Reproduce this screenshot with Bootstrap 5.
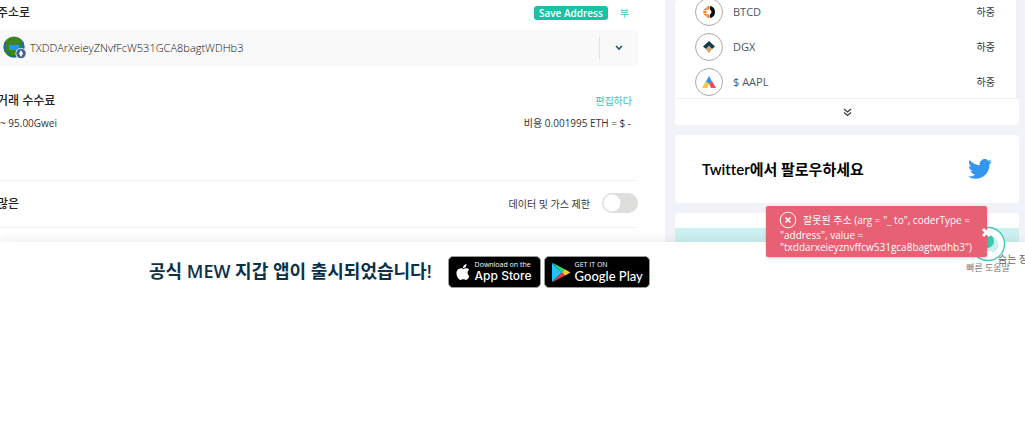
<!DOCTYPE html>
<html lang="ko">
<head>
<meta charset="utf-8">
<meta name="viewport" content="width=device-width, initial-scale=1">
<title>MEW</title>
<link href="https://cdn.jsdelivr.net/npm/bootstrap@5.3.0/dist/css/bootstrap.min.css" rel="stylesheet">
<style>
body{font-family:"Open Sans","Noto Sans CJK KR",sans-serif;font-size:10px;line-height:16px;color:#333;background:#fff;overflow-x:hidden}
.stage{overflow:hidden}
.send{padding-right:27px;min-width:0}
.label-line{height:30px;padding:0 9px 4px 0}
.ttl{font-size:12px;line-height:20px;font-weight:500;color:#222;margin:0 0 0 -3px}
.save{background:#1cc1a5;color:#fff;font-size:10px;line-height:14px;font-weight:600;border-radius:3px;padding:0 5px;border:0}
.teal{color:#3cc5b3;text-decoration:none;font-size:10px}
.addr{background:#f9f9f9;height:36px;border-radius:3px;padding-left:3px}
.addr input{border:0;background:none;outline:0;padding:0;font-size:11px;font-weight:300;color:#111;min-width:0}
.avatar{margin-right:2px}
.drop{width:39px;height:22px;border:0;border-left:1px solid #e2e2e2;background:none}
.fee{padding-top:25px;height:114px}
.fee .teal{margin-right:6px}
.fee .cost{margin-right:7px}
.more{height:48px;border-top:1px solid #f3f3f3;border-bottom:1px solid #f3f3f3}
.more .form-switch{min-height:0;padding:0}
.more .form-check-input{width:36px;height:20px;margin:0;border:0;background-color:#dededc;--bs-form-switch-bg:url("data:image/svg+xml,%3csvg xmlns='http://www.w3.org/2000/svg' viewBox='-4 -4 8 8'%3e%3ccircle r='3.4' fill='%23fff'/%3e%3c/svg%3e")}
.side{width:360px;background:#f2f3f9;padding:0 6px 0 10px;gap:10px}
.panel{background:#fff;border-radius:4px}
.tokens{height:98px;overflow:hidden;padding:0 21px 2px 20px;gap:7px;border-right:3px solid #f1f1f1}
.token{height:28px;flex:none;color:#4b5563}
.coin{width:28px;height:28px;border:1px solid #aaa;border-radius:50%;margin-right:10px}
.name{font-size:11px}
.bal{color:#333}
.expand{border:0;border-top:1px solid #f1f1f4;background:none;height:27px;width:100%}
.follow{height:68px;padding:0 27px;font-family:Lato,"Noto Sans CJK KR",sans-serif;font-size:15px;font-weight:600;font-variant-ligatures:none;color:#000}
.peek{height:29px;padding-top:15px}
.peek div{height:14px;background:#cdf0f2}
.promo{height:199px;box-shadow:0 -2px 10px rgba(0,0,0,.07);background:#fff;padding:14px 0 0 149px;position:relative}
.promo h1{font-size:18px;line-height:30px;font-weight:600;color:#0b3148;margin:0 16px 0 0}
.store{height:32px;background:#000;color:#fff;border:1px solid #999;border-radius:5px;text-decoration:none;padding-left:6px}
.apple{width:93px;margin-right:3px}.play{width:106px}
.store small{display:block;font-size:7px;line-height:8px}
.store b{display:block;font-size:12px;line-height:14px;font-weight:500;font-family:"Inter",sans-serif}
.play b{font-family:Lato,sans-serif;font-size:13px}
.help{right:15px;top:226px;width:44px;color:#777;font-size:9px;line-height:12px;text-align:center}
.help svg{display:block;margin:0 auto}
.hidden-info{left:calc(100% - 27px);top:251px;color:#666;font-size:10px}
.alertbox{right:38px;top:206px;width:221px;background:#e76073;color:#fff;border-radius:2px;padding:5px 14px 4px;line-height:12px;font-size:10px;box-shadow:0 1px 3px rgba(0,0,0,.2)}
.alertbox p{margin:0}
.mark-x{margin:0 6px 0 -1px;vertical-align:-5px}
.dismiss{right:-5px;top:21px;border:0;background:none;padding:0;line-height:0}
</style>
<script src="https://cdn.jsdelivr.net/npm/bootstrap@5.3.0/dist/js/bootstrap.bundle.min.js"></script>
</head>
<body>
<div class="position-relative stage">
<main class="d-flex">
  <section class="send flex-grow-1">
    <div class="label-line d-flex align-items-center">
      <label class="ttl me-auto" for="to">주소로</label>
      <button class="save me-2" type="button">Save Address</button>
      <a class="teal ms-1" href="#">부</a>
    </div>
    <div class="addr d-flex align-items-center">
      <svg width="25" height="25" viewBox="0 0 25 25" class="avatar flex-shrink-0"><defs><clipPath id="av"><circle cx="11" cy="11" r="10.500"/></clipPath></defs><g clip-path="url(#av)"><path fill="#3d8427" d="M0 0h22v22H0z"/><path fill="#1b6cad" d="M0 4h3v13H0zM19 4h3v13h-3zM4 15h3v4h9v4H4z"/><path fill="#d62f58" d="M0 4h2v3H0zM20 4h2v3h-2z"/><path fill="#2196f3" d="M6 9h10v5H6z"/></g><circle cx="18" cy="17.500" r="5.500" fill="#fff"/><circle cx="18" cy="17.500" r="4.800" fill="#41658c"/><path d="M18 14l2 3.500-2 3.500-2-3.500z" fill="#fff"/></svg>
      <input id="to" class="flex-grow-1" value="TXDDArXeieyZNvfFcW531GCA8bagtWDHb3">
      <button class="drop p-0 d-flex align-items-center justify-content-center" type="button" aria-label="주소 선택"><svg width="8" height="6" viewBox="0 0 8 6"><path d="M1 1l3 3 3-3" fill="none" stroke="#1d5878" stroke-width="1.600"/></svg></button>
    </div>
    <div class="fee">
      <div class="d-flex justify-content-between align-items-center"><h2 class="ttl">거래 수수료</h2><a class="teal" href="#">편집하다</a></div>
      <div class="d-flex justify-content-between mt-1"><span>~ 95.00Gwei</span><span class="cost">비용 0.001995 ETH = $ -</span></div>
    </div>
    <div class="more d-flex align-items-center">
      <h2 class="ttl me-auto">많은</h2>
      <label for="adv" class="me-2 pe-1">데이터 및 가스 제한</label>
      <div class="form-check form-switch"><input class="form-check-input float-none shadow-none d-block" type="checkbox" role="switch" id="adv"></div>
    </div>
  </section>
  <aside class="side d-flex flex-column flex-shrink-0">
    <div class="panel">
      <div class="tokens d-flex flex-column justify-content-end">
        <div class="token d-flex align-items-center"><span class="coin d-flex align-items-center justify-content-center"><svg width="12" height="12" viewBox="0 0 12 12"><path d="M4.200.600L6.500 0v3L4.200 4.200zM3.600 1v3.600L.500 4zM.3 4.800l3.200.5v1.600L.3 7.300zM.500 8l3.100-.5V11zM4.200 7.800L6.500 9v3l-2.300-.6z" fill="#f47b20"/><path d="M7 0c3.300.300 5 3 5 6s-1.700 5.700-5 6V8.500L8.300 7V5L7 3.500z" fill="#111"/></svg></span><span class="name me-auto">BTCD</span><span class="bal">하중</span></div>
        <div class="token d-flex align-items-center"><span class="coin d-flex align-items-center justify-content-center"><svg width="12" height="12" viewBox="0 0 12 12"><path d="M6 0l6 5.500L9 8 6 5 3 8 0 5.500z" fill="#123c52"/><path d="M6 5l3 3.200L6 12 3 8.200z" fill="#d7a566"/></svg></span><span class="name me-auto">DGX</span><span class="bal">하중</span></div>
        <div class="token d-flex align-items-center"><span class="coin d-flex align-items-center justify-content-center"><svg width="14" height="12" viewBox="0 0 14 12"><path d="M7 0l3.300 6L7 8 3.700 6z" fill="#3793ec"/><path d="M3.700 5.500L7 7.500 5.500 12H0z" fill="#fcc93d"/><path d="M10.300 5.500L14 12H9L7 7.500z" fill="#e84e66"/></svg></span><span class="name me-auto">$ AAPL</span><span class="bal">하중</span></div>
      </div>
      <button class="expand d-flex align-items-center justify-content-center p-0" type="button" aria-label="더 보기"><svg width="9" height="9" viewBox="0 0 9 9"><path d="M1 1l3.500 3L8 1M1 4.500l3.500 3 3.500-3" fill="none" stroke="#333" stroke-width="1.100"/></svg></button>
    </div>
    <a class="panel follow d-flex align-items-center justify-content-between text-decoration-none" href="#">Twitter에서 팔로우하세요<svg width="24" height="20" viewBox="0 0 24 20"><path fill="#3497ee" d="M24 2.400a9.800 9.800 0 0 1-2.800.8A4.900 4.900 0 0 0 23.300.500a9.900 9.900 0 0 1-3.100 1.200 4.900 4.900 0 0 0-8.400 4.500A14 14 0 0 1 1.700 1a4.900 4.900 0 0 0 1.500 6.600A4.900 4.900 0 0 1 1 7v.1a4.900 4.900 0 0 0 3.900 4.800 4.900 4.900 0 0 1-2.200.1 4.900 4.900 0 0 0 4.600 3.400A9.900 9.900 0 0 1 0 17.500a14 14 0 0 0 7.500 2.200c9.100 0 14-7.500 14-14V5A10 10 0 0 0 24 2.400z"/></svg></a>
    <div class="panel peek"><div></div></div>
  </aside>
</main>
<footer class="promo d-flex align-items-start">
  <h1>공식 MEW 지갑 앱이 출시되었습니다!</h1>
  <a class="store apple d-flex align-items-center" href="#"><svg class="me-1" width="16" height="18" viewBox="0 0 16 18"><path fill="#fff" d="M12.600 9.500c0-1.800 1.500-2.700 1.600-2.800-.9-1.300-2.200-1.500-2.700-1.500-1.200-.1-2.300.7-2.900.7-.6 0-1.500-.7-2.400-.7C3.100 5.300 1 7.900 1.600 11.600c.4 2.500 2.200 5.400 4 5.400 1 0 1.400-.7 2.700-.7s1.600.7 2.700.7c1.600 0 3.200-3 3.400-4-.1 0-1.800-.9-1.800-3.500zM10.700 4C11.300 3.200 11.600 2 11.500 1c-1 .1-2 .7-2.600 1.400-.5.700-1 1.700-.9 2.700 1 0 2.100-.5 2.700-1.100z"/></svg><span><small>Download on the</small><b>App Store</b></span></a>
  <a class="store play d-flex align-items-center" href="#"><svg class="me-1" width="20" height="21" viewBox="0 0 20 21"><path fill="#20c3f3" d="M1 1v19l10-9.500z"/><path fill="#1fe27b" d="M1 .5l13 7-3 3z"/><path fill="#fcc62d" d="M14 7.300l5.500 3.200-5.500 3.200-3-3.200z"/><path fill="#ef3b48" d="M1 20.500l13-7-3-3z"/></svg><span><small>GET IT ON</small><b>Google Play</b></span></a>
</footer>
<div class="help position-absolute"><svg width="36" height="36" viewBox="0 0 36 36"><circle cx="18" cy="18" r="16.500" fill="#fff" stroke="#3ccbb5" stroke-width="1.300"/><path d="M12 19a8 8 0 0 1 16-2c1 5-1 7-3 8l-1 2-3-2c-5 1-8-2-9-6z" fill="#c9f0ee"/><circle cx="17" cy="15" r="7" fill="#38c9b0"/></svg><span class="text-nowrap">빠른 도움말</span></div>
<div class="hidden-info position-absolute text-nowrap">숨는 장소</div>
<div class="alertbox position-absolute" role="alert">
  <p><svg class="mark-x" width="18" height="18" viewBox="0 0 18 18"><circle cx="9" cy="9" r="7.800" fill="none" stroke="#fff"/><path d="M6.500 6.500l5 5M11.500 6.500l-5 5" stroke="#fff" stroke-width="1.600"/></svg>잘못된 주소 (arg = "_ to", coderType = "address", value = "txddarxeieyznvffcw531gca8bagtwdhb3")</p>
  <button class="dismiss position-absolute" type="button" aria-label="닫기"><svg width="11" height="11" viewBox="0 0 11 11"><path d="M2 2l7 7M9 2L2 9" stroke="#fff" stroke-width="3"/></svg></button>
</div>
</div>
</body>
</html>
